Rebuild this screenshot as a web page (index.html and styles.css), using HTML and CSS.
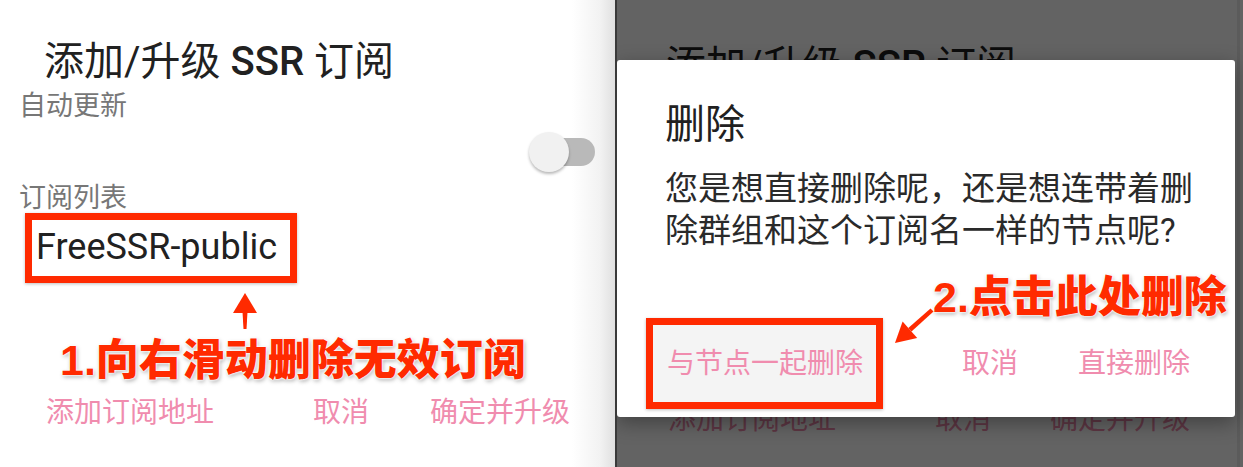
FILE: index.html
```html
<!DOCTYPE html>
<html lang="zh-CN">
<head>
<meta charset="utf-8">
<title>删除 SSR 订阅</title>
<link rel="stylesheet" href="styles.css">
</head>
<body>
<div class="stage">
  <section class="pane-left">
    <h1 class="title">添加/升级 <span class="title-latin">SSR</span> 订阅</h1>
    <div class="label label-auto">自动更新</div>
    <div class="switch-row">
      <span class="switch"><span class="switch-track"></span><span class="switch-thumb"></span></span>
    </div>
    <div class="label label-list">订阅列表</div>
    <div class="sub-item">FreeSSR-public</div>
    <svg class="arrow-up" width="30" height="36" viewBox="0 0 30 36" aria-hidden="true">
      <path d="M15 0 L27 20 L3 20 Z" fill="#ff2a00"/>
      <path d="M12.5 19 L17.5 19 L16.5 36 L13.5 36 Z" fill="#ff2a00"/>
    </svg>
    <p class="callout callout-1">1.向右滑动删除无效订阅</p>
    <div class="actions">
      <span class="btn">添加订阅地址</span>
      <span class="spacer"></span>
      <span class="btn">取消</span>
      <span class="btn">确定并升级</span>
    </div>
  </section>
  <div class="divider"></div>
  <section class="pane-right">
    <div class="ghost">
      <h1 class="title ghost-title">添加/升级 <span class="title-latin">SSR</span> 订阅</h1>
      <div class="actions ghost-actions">
        <span class="btn">添加订阅地址</span>
        <span class="spacer"></span>
        <span class="btn">取消</span>
        <span class="btn">确定并升级</span>
      </div>
    </div>
    <div class="scrim"></div>
    <div class="dialog">
      <h2 class="dialog-title">删除</h2>
      <p class="dialog-message">您是想直接删除呢，还是想连带着删除群组和这个订阅名一样的节点呢?</p>
      <p class="callout callout-2">2.点击此处删除</p>
      <div class="dialog-actions">
        <div class="press-box"><span class="btn">与节点一起删除</span></div>
        <span class="spacer"></span>
        <span class="btn">取消</span>
        <span class="btn">直接删除</span>
      </div>
      <svg class="arrow-diag" width="50" height="46" viewBox="0 0 50 46" aria-hidden="true">
        <path d="M6 39 L13.6 17.5 L28.2 33.9 Z" fill="#ff2a00"/>
        <path d="M19.3 24 L22.5 27.4 L44.5 7.6 L41.5 4.4 Z" fill="#ff2a00"/>
      </svg>
    </div>
  </section>
</div>
</body>
</html>
```

FILE: styles.css
```css
* {
  box-sizing: border-box;
  margin: 0;
  padding: 0;
}

html,
body {
  width: 1243px;
  height: 467px;
  overflow: hidden;
}

body {
  font-family: Roboto, "Noto Sans CJK SC", sans-serif;
  background: #ffffff;
}

.stage {
  display: flex;
  height: 467px;
}

/* ---------- left screenshot ---------- */
.pane-left {
  width: 615px;
  flex: none;
  display: flex;
  flex-direction: column;
  background: linear-gradient(to right, #ffffff 0, #ffffff 572px, #f2f2f2 600px, #e0e0e0 615px);
}

.divider {
  width: 2px;
  flex: none;
  background: #3a3a3a;
}

.title {
  font-size: 40px;
  line-height: 48px;
  font-weight: 400;
  color: #212121;
  padding: 38px 0 0 44px;
  white-space: nowrap;
}

.title-latin {
  font-weight: 500;
}

.label {
  font-size: 27px;
  line-height: 30px;
  color: #777777;
  margin-left: 19px;
}

.label-auto {
  margin-top: 5px;
}

.switch-row {
  display: flex;
  justify-content: flex-end;
  padding-right: 20px;
  margin-top: 11px;
  height: 40px;
}

.switch {
  position: relative;
  width: 66px;
  height: 40px;
}

.switch-track {
  position: absolute;
  right: 0;
  top: 6px;
  width: 56px;
  height: 28px;
  border-radius: 14px;
  background: #b9b9b9;
}

.switch-thumb {
  position: absolute;
  left: 0;
  top: 0;
  width: 40px;
  height: 40px;
  border-radius: 50%;
  background: #f1f1f1;
  box-shadow: 0 2px 3px rgba(0, 0, 0, 0.28);
}

.label-list {
  margin-top: 11px;
}

.sub-item {
  align-self: flex-start;
  margin-left: 25px;
  width: 272px;
  height: 70px;
  border: 7px solid #ff2a00;
  padding-left: 4px;
  font-size: 36px;
  line-height: 55px;
  color: #212121;
  box-shadow: 0 1px 3px rgba(0, 0, 0, 0.25);
  white-space: nowrap;
}

.arrow-up {
  display: block;
  margin: 10px 0 0 230px;
}

.callout {
  font-family: "Liberation Sans", "Noto Sans CJK SC", sans-serif;
  font-weight: 900;
  font-size: 43px;
  color: #ff2a00;
  white-space: nowrap;
  text-shadow: 0 0 2px #ffffff, 0 0 2px #ffffff, 0 0 3px #ffffff, 1px 2px 4px rgba(0, 0, 0, 0.35);
}

.callout-1 {
  line-height: 50px;
  margin: 6px 0 0 60px;
}

.actions {
  display: flex;
  margin-top: 11px;
  padding: 0 45px 0 46px;
  font-size: 28px;
  line-height: 34px;
  color: #f08cae;
  white-space: nowrap;
}

.spacer {
  flex: 1;
}

.actions .btn + .btn {
  margin-left: 61px;
}

/* ---------- right screenshot ---------- */
.pane-right {
  flex: 1;
  position: relative;
  overflow: hidden;
  background: #ffffff;
}

.pane-right::after {
  content: "";
  position: absolute;
  top: 0;
  bottom: 0;
  right: 3px;
  width: 3px;
  background: rgba(0, 0, 0, 0.08);
}

.ghost {
  height: 100%;
  display: flex;
  flex-direction: column;
}

.ghost-title {
  padding: 42px 0 0 49px;
}

.ghost-actions {
  margin-top: auto;
  margin-bottom: 30px;
  padding: 0 53px 0 51px;
}

.ghost-actions .btn + .btn {
  margin-left: 59px;
}

.scrim {
  position: absolute;
  inset: 0;
  background: rgba(0, 0, 0, 0.61);
}

.dialog {
  position: absolute;
  left: 0;
  top: 60px;
  width: 618px;
  background: #ffffff;
  border-radius: 3px;
  padding: 41px 0 8px 0;
  box-shadow: 0 6px 20px rgba(0, 0, 0, 0.35);
}

.dialog-title {
  font-size: 40px;
  line-height: 48px;
  font-weight: 400;
  color: #212121;
  padding-left: 48px;
}

.dialog-message {
  font-size: 33px;
  line-height: 42px;
  color: #2a2a2a;
  margin-top: 19px;
  padding: 0 40px 0 48px;
}

.callout-2 {
  line-height: 44px;
  margin: 23px 0 0 316px;
}

.dialog-actions {
  display: flex;
  align-items: center;
  margin-top: -1px;
  padding: 0 45px 0 29px;
  font-size: 28px;
  line-height: 34px;
  color: #f08cae;
  white-space: nowrap;
}

.press-box {
  width: 237px;
  height: 91px;
  border: 7px solid #ff2a00;
  background: #f4f4f4;
  display: flex;
  align-items: center;
  padding-left: 14px;
  box-shadow: 0 1px 3px rgba(0, 0, 0, 0.25);
}

.dialog-actions .btn + .btn {
  margin-left: 60px;
}

.arrow-diag {
  position: absolute;
  left: 272px;
  top: 244px;
}
```
